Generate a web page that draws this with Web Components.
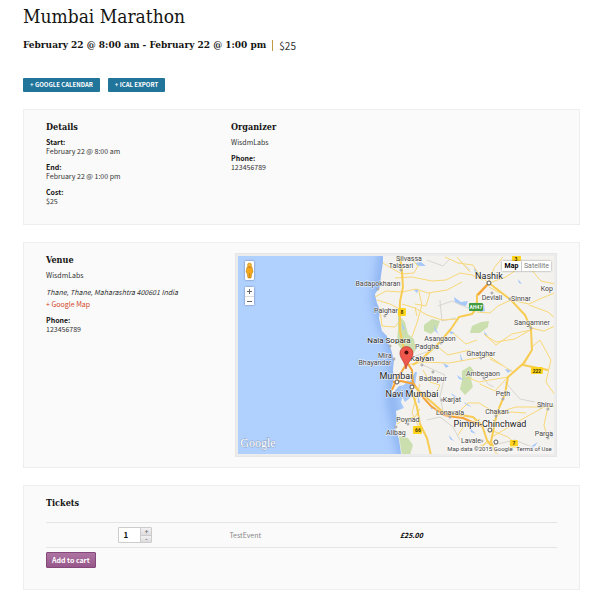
<!DOCTYPE html>
<html lang="en">
<head>
<meta charset="utf-8">
<meta name="viewport" content="width=device-width, initial-scale=1">
<title>Mumbai Marathon</title>
<style>
  :root {
    --sans: "Noto Sans CJK SC", "Noto Sans", sans-serif;
    --slab: "DejaVu Serif Condensed", "DejaVu Serif", serif;
    --ink: #141412;
    --text: #333;
    --line: #e4e4e4;
  }

  body {
    margin: 0;
    padding: 4px 20px 12px 23px;
    background: #fff;
    color: var(--text);
    font: 7px/9px var(--sans);
  }

  main {
    display: flex;
    flex-direction: column;
    gap: 17px;
  }

  p {
    margin: 2px 0 7px;
  }

  address {
    margin-bottom: 3px;
    padding-top: 1px;
  }

  .map-link {
    display: block;
    margin-bottom: 7px;
    color: #d2451e;
    text-decoration: none;
  }
</style>
</head>
<body>
  <main>
    <event-header name="Mumbai Marathon" when="February 22 @ 8:00 am - February 22 @ 1:00 pm" cost="$25">
      <export-link href="#google-calendar">+ Google Calendar</export-link>
      <export-link href="#ical">+ iCal Export</export-link>
    </event-header>

    <event-card class="info">
      <meta-group heading="Details">
        <meta-item term="Start:">February 22 @ 8:00 am</meta-item>
        <meta-item term="End:">February 22 @ 1:00 pm</meta-item>
        <meta-item term="Cost:">$25</meta-item>
      </meta-group>
      <meta-group heading="Organizer">
        <p>WisdmLabs</p>
        <meta-item term="Phone:">123456789</meta-item>
      </meta-group>
    </event-card>

    <event-card>
      <meta-group heading="Venue">
        <p>WisdmLabs</p>
        <address>Thane, Thane, Maharashtra 400601 India</address>
        <a class="map-link" href="#map">+ Google Map</a>
        <meta-item term="Phone:">123456789</meta-item>
      </meta-group>
      <venue-map id="map"></venue-map>
    </event-card>

    <event-card>
      <ticket-form heading="Tickets" ticket="TestEvent" price="£25.00"></ticket-form>
    </event-card>
  </main>

<template id="map-template">
  <style>
    :host {
      display: block;
      position: relative;
      box-sizing: border-box;
      width: 58%;
      height: 204px;
      margin-left: auto;
      margin-right: 22px;
      padding: 2px;
      border: 1px solid #e6e6e6;
      background: #ececec;
      font-family: Roboto, sans-serif;
    }

    svg.tiles {
      display: block;
      width: 100%;
      height: 100%;
    }

    .controls {
      position: absolute;
      top: 7px;
      left: 9px;
      display: flex;
      flex-direction: column;
      gap: 7px;
    }

    button {
      margin: 0;
      padding: 0;
      border: 0;
      background: #fff;
      font: 7px/10px Roboto, sans-serif;
      color: #777;
      cursor: pointer;
    }

    .pegman,
    .zoom,
    .types {
      border-radius: 1px;
      box-shadow: 0 0 2px rgba(0, 0, 0, .5);
    }

    .pegman {
      width: 9px;
      height: 19px;
    }

    .pegman svg {
      display: block;
      width: 9px;
      height: 19px;
    }

    .zoom {
      display: flex;
      flex-direction: column;
      width: 9px;
      background: #fff;
    }

    .zoom button {
      height: 9px;
    }

    .zoom button svg {
      display: block;
      width: 9px;
      height: 9px;
    }

    .zoom button + button {
      border-top: 1px solid #ddd;
    }

    .types {
      position: absolute;
      top: 7px;
      right: 5px;
      display: flex;
    }

    .types button {
      width: 19px;
    }

    .types button + button {
      width: 30px;
      border-left: 1px solid #ccc;
    }

    .types .active {
      color: #000;
      font-weight: 700;
    }

    .land { fill: #f4f2ee; }
    .park { fill: #cbdfae; }
    .water { fill: #a6c8fb; }
    .road { fill: none; stroke: #f8d878; stroke-width: 1; stroke-linejoin: round; }
    .minor { fill: none; stroke: #d9d6d0; stroke-width: 1; }
    .main { fill: none; stroke: #f7cc55; stroke-width: 2; stroke-linejoin: round; }
    .express { fill: none; stroke: #f6a339; stroke-width: 2; stroke-linejoin: round; }
    .places circle { fill: #fff; stroke: #555; }
    .small circle { stroke: #999; }

    text {
      font-size: 7px;
      fill: #444;
      stroke: #fff;
      stroke-width: 1px;
      stroke-opacity: .8;
      paint-order: stroke;
      text-anchor: middle;
    }

    .town text { font-size: 8px; fill: #222; }
    .city text { font-size: 9px; fill: #222; }
    .shield text { font-size: 5px; stroke: none; font-weight: 700; fill: #443600; }
    .shield .green { fill: #fff; }
    .credit text { font-size: 6px; }
    .logo { font: 12px "Liberation Serif", serif; fill: #fff; stroke: #8496b4; stroke-opacity: .8; }
  </style>
  <svg class="tiles" viewBox="238 256 316 198" preserveAspectRatio="xMidYMid slice">
    <defs>
      <filter id="shelf" x="-100%" y="-10%" width="300%" height="120%"><feGaussianBlur stdDeviation="4"/></filter>
    </defs>
    <rect width="800" height="600" fill="#b0d0fe"/>
    <path d="M385 250 381 275 377 298 383 325 391 340 394 375 392 400 397 425 404 460" fill="none" stroke="#90b6f2" stroke-width="12" filter="url(#shelf)"/>
    <path class="land" d="M383 250V262L381 276 380 287 375 294 377 303 380 310 379 318 382 331 387 336 388 342 391 349 394 360 393 370 394 379 390 395 394 392 399 386 404 385 408 380 413 386 410 394 407 390 403 396 401 402 404 408 396 411 397 420 395 428 399 439 402 460H800V250Z"/>
    <path class="park" d="M398 314 405 322 408 334 414 339 416 350 409 357 402 350 397 343 398 329Z M424 325 432 319 440 321 437 329 431 334 424 331Z M472 326 481 322 489 321 488 327 480 333 470 333Z M462 371 470 366 474 371 471 379 473 387 465 395 460 389 462 381Z M399 436 408 438 413 445 410 455H402Z M397 257H402L400 264Z"/>
    <g class="water">
      <path d="M404 385 411 380 415 372 417 372 415 385 410 398 405 402 402 396Z"/>
      <path d="M454 297 461 302 468 301 466 306 460 305 455 302Z M479 305 484 304 485 311 480 312Z M434 325 438 333 440 335 435 331Z M415 263 421 262 426 266 419 266Z M402 323 405 329 403 330Z M414 290 419 289 417 293Z M448 330 455 333 451 334Z M484 331 488 336 485 335Z M474 267 478 274 475 273Z M518 279 522 284 519 283Z M443 363 449 366 446 368Z M457 375 464 380 459 379Z M451 393 458 398 453 396Z M464 402 472 407 466 405Z M505 369 512 370 508 373Z M460 353 463 361 461 361Z M430 404 434 409 431 409Z M418 393 420 403 418 403Z M465 420 473 424 468 423Z M470 428 476 434 471 432Z M530 447 538 442 533 449Z M537 407 546 403 541 409Z M449 435 454 441 450 439Z M550 430 553 438 550 436Z"/>
    </g>
    <path class="minor" d="M427 260 443 266 450 259 M438 306 452 301 468 308 477 302 M456 318 442 321 440 300 M423 365 445 375 440 397 443 410 M505 382 520 399 535 402 M400 311 389 309 383 312 M412 357 430 351 M470 270 460 261 M427 420 440 417 453 427 460 440 M480 372 488 384 494 387 M493 445 515 440 532 447"/>
    <path class="road" d="M383 263 393 269 402 274 414 273 418 266 410 257 M395 278 412 277 432 281 446 280 460 273 472 275 483 280 M375 297 386 291 402 292 416 289 428 293 447 290 462 282 M402 304 415 308 427 315 442 320 458 319 M419 291 422 305 417 323 412 337 M380 308 382 326 395 327 400 321 M377 300 390 304 400 309 M415 307 417 316 M430 293 426 306 415 304"/>
    <path class="road" d="M489 283 480 276 473 265 458 263 445 257 M489 283 494 268 503 257 M489 283 506 277 519 268 530 268 541 281 555 284 M489 287 500 293 M511 300 529 304 542 298 555 293 M529 305 548 312 555 318 M531 328 544 331 555 326 M532 329 515 339 496 342 485 335 M477 312 490 313 498 306 511 300 M484 334 496 345 512 334 531 330 M490 359 502 365 513 372 523 363 M405 365 425 362 449 363 466 360 489 356 502 365 M508 377 490 380 479 382 467 377 M508 377 495 391 480 384 M555 395 546 382 551 360 540 340 532 347"/>
    <path class="road" d="M453 333 466 344 477 340 M438 347 448 355 470 350 M423 370 430 382 440 385 435 397 M420 384 415 402 412 413 420 429 M453 418 468 403 479 403 496 413 516 407 545 407 555 406 M548 407 544 425 548 439 M544 407 519 421 492 437 M497 415 489 433 M493 431 508 437 522 450 M491 441 479 447 M397 424 405 419 415 417 420 409 M480 419 464 426 458 435 M497 415 511 412 526 413 M480 450 487 441 M457 257 470 272"/>
    <path class="main" d="M400 255 402 271 403 287 400 302 400 331 405 354 406 366 M489 283 511 300 525 315 531 328 532 350 523 364 508 377 505 394 497 413 491 442 497 455 M413 365 425 356 439 343 451 329 459 317 472 314 477 308 477 295 489 283 M411 389 417 407 420 424 427 438 431 455 M532 350 523 365 548 370"/>
    <path class="express" d="M406 365 397 379 392 390 M393 382 401 381 414 384 421 395 431 406 444 415 455 417 463 418 472 422 483 426 M406 361 412 370 413 384 M478 295 489 283"/>
    <path class="main" d="M414 386 426 397 443 412 455 414 473 417 482 425 487 440 497 454"/>

    <g class="shield">
      <rect x="398" y="308" width="8" height="8" rx="1" fill="#ffd41f"/><text x="402" y="314">8</text>
      <rect x="512" y="255" width="9" height="6" rx="1" fill="#ffd41f"/><text x="516" y="261">3</text>
      <rect x="413" y="426" width="9" height="8" rx="1" fill="#ffd41f"/><text x="418" y="432">66</text>
      <rect x="531" y="367" width="12" height="7" rx="1" fill="#ffd41f"/><text x="537" y="373">222</text>
      <rect x="510" y="440" width="8" height="8" rx="1" fill="#ffd41f"/><text x="514" y="445">7</text>
      <rect x="469" y="303" width="14" height="8" rx="1" fill="#429b3f"/><text class="green" x="476" y="309">AH47</text>
    </g>
    <g class="places small">
      <circle cx="401" cy="270" r="1"/><circle cx="378" cy="289" r="1"/><circle cx="385" cy="316" r="1"/><circle cx="390" cy="346" r="1"/>
      <circle cx="394" cy="359" r="1"/><circle cx="422" cy="365" r="1"/><circle cx="433" cy="372" r="1"/><circle cx="441" cy="343" r="1"/>
      <circle cx="442" cy="400" r="1"/><circle cx="450" cy="417" r="1"/><circle cx="408" cy="424" r="1"/><circle cx="396" cy="427" r="1"/>
      <circle cx="492" cy="293" r="1"/><circle cx="510" cy="299" r="1"/><circle cx="531" cy="328" r="1"/><circle cx="481" cy="358" r="1"/>
      <circle cx="484" cy="378" r="1"/><circle cx="503" cy="399" r="1"/><circle cx="496" cy="416" r="1"/><circle cx="548" cy="409" r="1"/>
      <circle cx="548" cy="438" r="1"/><circle cx="482" cy="441" r="1"/>
    </g>
    <g class="places">
      <circle cx="489" cy="283" r="2"/><circle cx="397" cy="382" r="2"/><circle cx="412" cy="387" r="2"/>
      <circle cx="490" cy="430" r="2"/><circle cx="496" cy="442" r="2"/>
    </g>
    <g>
      <text x="409" y="261">Silvassa</text>
      <text x="401" y="268">Talasari</text>
      <text x="378" y="286">Badapokharan</text>
      <text x="386" y="313">Palghar</text>
      <text x="440" y="341">Asangaon</text>
      <text x="427" y="349">Padgha</text>
      <text x="385" y="358">Mira</text>
      <text x="375" y="365">Bhayandar</text>
      <text x="433" y="381">Badlapur</text>
      <text x="452" y="402">Karjat</text>
      <text x="450" y="415">Lonavala</text>
      <text x="408" y="422">Poynad</text>
      <text x="396" y="435">Alibag</text>
      <text x="492" y="300">Devlali</text>
      <text x="521" y="301">Sinnar</text>
      <text x="547" y="291">Kop</text>
      <text x="532" y="325">Sangamner</text>
      <text x="481" y="356">Ghatghar</text>
      <text x="483" y="376">Ambegaon</text>
      <text x="503" y="396">Peth</text>
      <text x="497" y="414">Chakan</text>
      <text x="545" y="407">Shiru</text>
      <text x="544" y="436">Parga</text>
      <text x="471" y="443">Lavale</text>
    </g>
    <g class="town">
      <text x="389" y="343">Nala Sopara</text>
      <text x="422" y="361">Kalyan</text>
    </g>
    <g class="city">
      <text x="396" y="379">Mumbai</text>
      <text x="412" y="397">Navi Mumbai</text>
      <text x="489" y="279">Nashik</text>
      <text x="490" y="427">Pimpri-Chinchwad</text>
    </g>
    <g class="credit">
      <rect x="448" y="446" width="107" height="8" fill="#f5f5f5" opacity=".6"/>
      <text x="480" y="451">Map data ©2015 Google</text>
      <text x="534" y="451">Terms of Use</text>
    </g>
    <text class="logo" x="258" y="447">Google</text>
    <path d="M406 369C405 361 400 359 400 353A6 6 0 0 1 413 353C413 359 408 361 406 369Z" fill="#f0574c" stroke="#b13b33" stroke-width=".7"/>
    <circle cx="406.500" cy="352.500" r="2" fill="#4d0d09"/>
  </svg>
  <div class="controls">
    <button class="pegman" type="button" aria-label="Street View">
      <svg viewBox="0 0 9 19">
        <path d="M2 6Q4.500 4 7 6L8 11 7 12 6 17H3L2 12 1 11Z" fill="#f3a81c" stroke="#b9770b" stroke-width=".5"/>
        <circle cx="4.500" cy="4" r="2" fill="#f7b731" stroke="#b9770b" stroke-width=".5"/>
        <path d="M3 6H6L4.500 7Z" fill="#dc6a22"/>
        <path d="M4.500 12V17" stroke="#b9770b" stroke-width=".6"/>
      </svg>
    </button>
    <div class="zoom">
      <button type="button" aria-label="Zoom in"><svg viewBox="0 0 9 9"><path d="M2 4.500H7M4.500 2V7" stroke="#666"/></svg></button>
      <button type="button" aria-label="Zoom out"><svg viewBox="0 0 9 9"><path d="M2 4.500H7" stroke="#666"/></svg></button>
    </div>
  </div>
  <div class="types">
    <button class="active" type="button">Map</button>
    <button type="button">Satellite</button>
  </div>
</template>

<script>
  // Title, date line and the calendar export links
  class EventHeader extends HTMLElement {
    constructor() {
      super();
      this.attachShadow({ mode: 'open' });
    }

    connectedCallback() {
      this.shadowRoot.innerHTML = `
        <style>
          :host { display: block; }
          h1 {
            margin: 0 0 9px;
            font: 19px/24px var(--slab);
            color: var(--ink);
          }
          .schedule {
            display: flex;
            align-items: center;
            margin-bottom: 25px;
          }
          h2 {
            margin: 0;
            font: bold 10px/16px var(--slab);
            color: var(--ink);
          }
          .cost {
            margin-left: 6px;
            padding-left: 6px;
            border-left: 1px solid #c09a48;
            font-size: 10px;
            line-height: 11px;
          }
          .links { display: flex; gap: 8px; }
        </style>
        <h1>${this.getAttribute('name')}</h1>
        <div class="schedule">
          <h2>${this.getAttribute('when')}</h2>
          <span class="cost">${this.getAttribute('cost')}</span>
        </div>
        <div class="links"><slot></slot></div>
      `;
    }
  }

  class ExportLink extends HTMLElement {
    constructor() {
      super();
      this.attachShadow({ mode: 'open' });
    }

    connectedCallback() {
      this.shadowRoot.innerHTML = `
        <style>
          :host { display: block; }
          a {
            display: block;
            padding: 0 7px;
            border-radius: 1px;
            background: #21759b;
            color: #fff;
            font: bold 6px/14px var(--sans);
            text-decoration: none;
            text-transform: uppercase;
          }
        </style>
        <a href="${this.getAttribute('href')}"><slot></slot></a>
      `;
    }
  }

  // Grey panel, its children sit side by side
  class EventCard extends HTMLElement {
    constructor() {
      super();
      this.attachShadow({ mode: 'open' });
      this.shadowRoot.innerHTML = `
        <style>
          :host {
            display: flex;
            align-items: flex-start;
            padding: 10px 0;
            border: 1px solid #eee;
            background: #fafafa;
          }
          :host(.info) { padding-bottom: 11px; }
        </style>
        <slot></slot>
      `;
    }
  }

  class MetaGroup extends HTMLElement {
    constructor() {
      super();
      this.attachShadow({ mode: 'open' });
    }

    connectedCallback() {
      this.shadowRoot.innerHTML = `
        <style>
          :host {
            display: block;
            box-sizing: border-box;
            flex: 0 0 33.333%;
            padding-left: 22px;
          }
          h3 {
            margin: 0 0 4px;
            font: bold 9px/14px var(--slab);
            color: var(--ink);
          }
        </style>
        <h3>${this.getAttribute('heading')}</h3>
        <slot></slot>
      `;
    }
  }

  class MetaItem extends HTMLElement {
    constructor() {
      super();
      this.attachShadow({ mode: 'open' });
    }

    connectedCallback() {
      this.shadowRoot.innerHTML = `
        <style>
          :host { display: block; margin-bottom: 7px; }
          strong { display: block; color: var(--ink); }
        </style>
        <strong>${this.getAttribute('term')}</strong>
        <slot></slot>
      `;
    }
  }

  class VenueMap extends HTMLElement {
    constructor() {
      super();
      this.attachShadow({ mode: 'open' });
      const template = document.getElementById('map-template');
      this.shadowRoot.append(template.content.cloneNode(true));
    }
  }

  // Number box with its own plus and minus buttons
  class QuantityInput extends HTMLElement {
    constructor() {
      super();
      this.attachShadow({ mode: 'open' });
      this.shadowRoot.innerHTML = `
        <style>
          :host {
            display: inline-flex;
            vertical-align: middle;
            border: 1px solid #ccc;
            border-radius: 1px;
          }
          input {
            box-sizing: border-box;
            width: 21px;
            height: 14px;
            margin: 0;
            padding: 0 8px 0 0;
            border: 0;
            background: #fff;
            color: #111;
            font: bold 8px/14px var(--sans);
            text-align: center;
            appearance: textfield;
          }
          input::-webkit-inner-spin-button { appearance: none; margin: 0; }
          .steps {
            display: flex;
            flex-direction: column;
            border-left: 1px solid #ccc;
          }
          button {
            width: 10px;
            height: 7px;
            padding: 0;
            border: 0;
            background: linear-gradient(#f3f1f3, #dedbde);
            color: #666;
            font: bold 6px/6px var(--sans);
          }
          button + button { border-top: 1px solid #ccc; }
        </style>
        <input type="number" min="1" value="1" aria-label="Quantity">
        <span class="steps">
          <button id="plus" type="button">+</button>
          <button id="minus" type="button">-</button>
        </span>
      `;
      const input = this.shadowRoot.querySelector('input');
      this.shadowRoot.querySelector('#plus').addEventListener('click', () => input.stepUp());
      this.shadowRoot.querySelector('#minus').addEventListener('click', () => input.stepDown());
    }
  }

  class TicketForm extends HTMLElement {
    constructor() {
      super();
      this.attachShadow({ mode: 'open' });
    }

    connectedCallback() {
      this.shadowRoot.innerHTML = `
        <style>
          :host { display: block; flex: 1; padding: 0 22px 11px; }
          h3 {
            margin: 0 0 12px;
            font: bold 9px/14px var(--slab);
            color: var(--ink);
          }
          table {
            width: 100%;
            margin-bottom: 4px;
            border-collapse: collapse;
            table-layout: fixed;
            text-align: center;
          }
          td {
            height: 24px;
            padding: 0;
            border: solid var(--line);
            border-width: 1px 0;
          }
          .quantity { width: 35%; }
          .name { width: 8%; color: #888; }
          .price { color: #000; font-weight: bold; font-style: italic; }
          .add {
            height: 16px;
            padding: 0 5px;
            border: 1px solid #85487a;
            border-radius: 1px;
            background: linear-gradient(#ad74a2, #96588a);
            color: #fff;
            font: bold 7px/14px var(--sans);
          }
        </style>
        <h3>${this.getAttribute('heading')}</h3>
        <form>
          <table>
            <tr>
              <td class="quantity"><quantity-input></quantity-input></td>
              <td class="name">${this.getAttribute('ticket')}</td>
              <td class="price">${this.getAttribute('price')}</td>
            </tr>
          </table>
          <button class="add" type="button">Add to cart</button>
        </form>
      `;
    }
  }

  customElements.define('event-header', EventHeader);
  customElements.define('export-link', ExportLink);
  customElements.define('event-card', EventCard);
  customElements.define('meta-group', MetaGroup);
  customElements.define('meta-item', MetaItem);
  customElements.define('venue-map', VenueMap);
  customElements.define('quantity-input', QuantityInput);
  customElements.define('ticket-form', TicketForm);
</script>
</body>
</html>
